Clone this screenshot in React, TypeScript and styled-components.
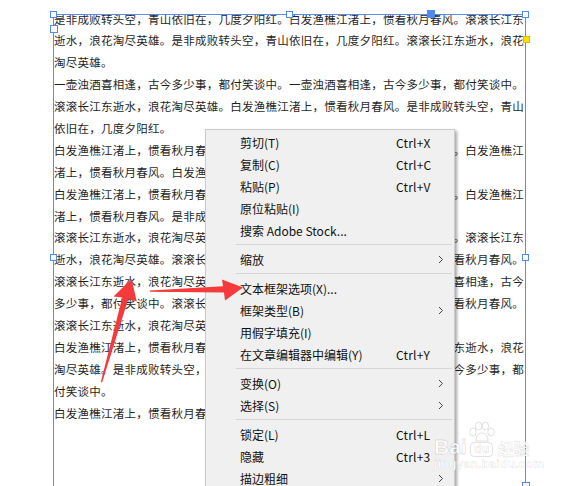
import React from 'react';
import styled, { createGlobalStyle } from 'styled-components';

const Global = createGlobalStyle`
  html, body { margin: 0; padding: 0; background: #ffffff; }
  body { font-family: "Noto Sans CJK SC", "Noto Sans", sans-serif; }
`;

const Canvas = styled.div`
  position: relative;
  width: 567px;
  height: 486px;
  overflow: hidden;
  background: #ffffff;
`;

const Story = styled.div`
  padding: 8.5px 0 0 54px;
  font-family: "Noto Sans CJK SC", sans-serif;
  font-size: 11.5px;
  letter-spacing: 0.25px;
  line-height: 21.9px;
  color: #1f1f1f;
`;

const Line = styled.div`
  white-space: pre;
  height: 21.9px;
`;

const Frame = styled.div`
  position: absolute;
  left: 53px;
  top: 14px;
  width: 473px;
  height: 490px;
  box-sizing: border-box;
  border: 1px solid #5a8ded;
  pointer-events: none;
`;

type HandleKind = 'plain' | 'filled' | 'yellow';

const Handle = styled.div<{ $x: number; $y: number; $size: number; $kind: HandleKind }>`
  position: absolute;
  left: ${(p) => p.$x - p.$size / 2}px;
  top: ${(p) => p.$y - p.$size / 2}px;
  width: ${(p) => p.$size}px;
  height: ${(p) => p.$size}px;
  box-sizing: border-box;
  border: 1px solid ${(p) => (p.$kind === 'yellow' ? '#d6b800' : '#4f8bee')};
  background: ${(p) => (p.$kind === 'filled' ? '#4f8bee' : p.$kind === 'yellow' ? '#ffe400' : '#ffffff')};
`;

const Menu = styled.div`
  position: absolute;
  left: 205px;
  top: 129px;
  width: 250px;
  box-sizing: border-box;
  padding: 1px 0 12px;
  background: #f0f0f0;
  border: 1px solid #cbcbcb;
  box-shadow: 2px 2px 3px rgba(0, 0, 0, 0.35);
  font-family: "Noto Sans CJK SC", sans-serif;
  font-size: 12px;
  color: #111111;
`;

const Item = styled.div`
  display: grid;
  grid-template-columns: 1fr 40px 10px;
  align-items: center;
  height: 22px;
  padding: 0 8px 0 34px;
`;

const Label = styled.span`
  white-space: nowrap;
`;

const Shortcut = styled.span`
  white-space: nowrap;
  letter-spacing: 0.2px;
`;

const Chevron = styled.svg`
  width: 6px;
  height: 9px;
  margin-left: 2px;
  display: block;
`;

const Separator = styled.div`
  height: 1px;
  margin: 3px 2px 3px 30px;
  background: #d6d6d6;
`;

const ArrowLayer = styled.svg`
  position: absolute;
  left: 0;
  top: 0;
  width: 567px;
  height: 486px;
  pointer-events: none;
`;

const Watermark = styled.div`
  position: absolute;
  left: 434px;
  top: 421px;
  display: flex;
  flex-direction: column;
  gap: 1px;
  pointer-events: none;
  opacity: 0.9;
`;

const MarkRow = styled.div`
  display: flex;
  align-items: flex-end;
`;

const BaiText = styled.span`
  font-family: "Liberation Sans", Arial, sans-serif;
  font-weight: bold;
  font-size: 21px;
  line-height: 21px;
  color: #ffffff;
  -webkit-text-stroke: 0.8px rgba(0, 0, 0, 0.14);
`;

const PawBlock = styled.div`
  display: flex;
  flex-direction: column;
  align-items: center;
  margin: 0 2px 0 1px;
`;

const DuBox = styled.span`
  font-family: "Liberation Sans", Arial, sans-serif;
  font-weight: bold;
  font-size: 12px;
  line-height: 13px;
  padding: 0 3px;
  border: 1px solid rgba(0, 0, 0, 0.12);
  border-radius: 4px;
  color: #ffffff;
  -webkit-text-stroke: 0.6px rgba(0, 0, 0, 0.14);
`;

const JingYan = styled.span`
  font-family: "Noto Sans CJK SC", sans-serif;
  font-weight: bold;
  font-size: 16px;
  line-height: 18px;
  color: #ffffff;
  -webkit-text-stroke: 0.7px rgba(0, 0, 0, 0.13);
`;

const Url = styled.span`
  font-family: "Liberation Sans", Arial, sans-serif;
  font-weight: bold;
  font-size: 12px;
  line-height: 13px;
  letter-spacing: 0.3px;
  color: #ffffff;
  -webkit-text-stroke: 0.6px rgba(0, 0, 0, 0.12);
`;

const lines: string[] = [
  '是非成败转头空，青山依旧在，几度夕阳红。白发渔樵江渚上，惯看秋月春风。滚滚长江东',
  '逝水，浪花淘尽英雄。是非成败转头空，青山依旧在，几度夕阳红。滚滚长江东逝水，浪花',
  '淘尽英雄。',
  '一壶浊酒喜相逢，古今多少事，都付笑谈中。一壶浊酒喜相逢，古今多少事，都付笑谈中。',
  '滚滚长江东逝水，浪花淘尽英雄。白发渔樵江渚上，惯看秋月春风。是非成败转头空，青山',
  '依旧在，几度夕阳红。',
  '白发渔樵江渚上，惯看秋月春风。是非成败转头空，青山依旧在，几度夕阳红。白发渔樵江',
  '渚上，惯看秋月春风。白发渔樵江渚上，惯看秋月春风。',
  '白发渔樵江渚上，惯看秋月春风。一壶浊酒喜相逢，古今多少事，都付笑谈中。白发渔樵江',
  '渚上，惯看秋月春风。是非成败转头空，青山依旧在，几度夕阳红。',
  '滚滚长江东逝水，浪花淘尽英雄。是非成败转头空，青山依旧在，几度夕阳红。滚滚长江东',
  '逝水，浪花淘尽英雄。滚滚长江东逝水，浪花淘尽英雄。白发渔樵江渚上，惯看秋月春风。',
  '滚滚长江东逝水，浪花淘尽英雄。白发渔樵江渚上，惯看秋月春风。一壶浊酒喜相逢，古今',
  '多少事，都付笑谈中。滚滚长江东逝水，浪花淘尽英雄。白发渔樵江渚上，惯看秋月春风。',
  '滚滚长江东逝水，浪花淘尽英雄。',
  '白发渔樵江渚上，惯看秋月春风。白发渔樵江渚上，惯看秋月春风。滚滚长江东逝水，浪花',
  '淘尽英雄。是非成败转头空，青山依旧在，几度夕阳红。一壶浊酒喜相逢，古今多少事，都',
  '付笑谈中。',
  '白发渔樵江渚上，惯看秋月春风。',
];

type Entry = { label: string; shortcut?: string; sub?: boolean } | 'sep';

const menu: Entry[] = [
  { label: '剪切(T)', shortcut: 'Ctrl+X' },
  { label: '复制(C)', shortcut: 'Ctrl+C' },
  { label: '粘贴(P)', shortcut: 'Ctrl+V' },
  { label: '原位粘贴(I)' },
  { label: '搜索 Adobe Stock...' },
  'sep',
  { label: '缩放', sub: true },
  'sep',
  { label: '文本框架选项(X)...' },
  { label: '框架类型(B)', sub: true },
  { label: '用假字填充(I)' },
  { label: '在文章编辑器中编辑(Y)', shortcut: 'Ctrl+Y' },
  'sep',
  { label: '变换(O)', sub: true },
  { label: '选择(S)', sub: true },
  'sep',
  { label: '锁定(L)', shortcut: 'Ctrl+L' },
  { label: '隐藏', shortcut: 'Ctrl+3' },
  { label: '描边粗细', sub: true },
];

const handles: { x: number; y: number; size: number; kind: HandleKind }[] = [
  { x: 53.5, y: 14.5, size: 7, kind: 'plain' },
  { x: 53.5, y: 28.5, size: 8, kind: 'plain' },
  { x: 289.5, y: 14.5, size: 7, kind: 'plain' },
  { x: 431, y: 14, size: 8, kind: 'filled' },
  { x: 525.5, y: 14.5, size: 7, kind: 'plain' },
  { x: 526.5, y: 39, size: 7, kind: 'yellow' },
  { x: 53.5, y: 257.5, size: 7, kind: 'plain' },
  { x: 525.5, y: 257.5, size: 7, kind: 'plain' },
  { x: 525.5, y: 486, size: 8, kind: 'plain' },
];

const Paw = () => (
  <svg width="28" height="21" viewBox="0 0 28 21">
    <g fill="#ffffff" stroke="rgba(0,0,0,0.13)" strokeWidth="1">
      <ellipse cx="5" cy="11" rx="3.2" ry="4" />
      <ellipse cx="10.5" cy="5" rx="3.2" ry="4" />
      <ellipse cx="17.5" cy="5" rx="3.2" ry="4" />
      <ellipse cx="23" cy="11" rx="3.2" ry="4" />
      <path d="M8 20 C8 14 11 12 14 12 C17 12 20 14 20 20 Z" />
    </g>
  </svg>
);

export default function App() {
  return (
    <>
      <Global />
      <Canvas>
        <Story>
          {lines.map((l, i) => (
            <Line key={i}>{l}</Line>
          ))}
        </Story>

        <Frame />
        {handles.map((h, i) => (
          <Handle key={i} $x={h.x} $y={h.y} $size={h.size} $kind={h.kind} />
        ))}

        <Menu>
          {menu.map((e, i) =>
            e === 'sep' ? (
              <Separator key={i} />
            ) : (
              <Item key={i}>
                <Label>{e.label}</Label>
                <Shortcut>{e.shortcut ?? ''}</Shortcut>
                {e.sub ? (
                  <Chevron viewBox="0 0 6 9">
                    <polyline points="1,1 4.5,4.5 1,8" fill="none" stroke="#444" strokeWidth="1" />
                  </Chevron>
                ) : (
                  <span />
                )}
              </Item>
            )
          )}
        </Menu>

        <ArrowLayer viewBox="0 0 567 486">
          <polygon
            fill="#f43a3a"
            points="150,290.5 223,286.2 222,279.5 243,287.5 225,300.5 224,292.5 150,291.8"
          />
          <polygon
            fill="#f43a3a"
            points="100.8,382 122.3,297.5 113.5,296.5 131.5,279 136.8,301.5 128.3,299 102.2,382.3"
          />
        </ArrowLayer>

        <Watermark>
          <MarkRow>
            <BaiText>Bai</BaiText>
            <PawBlock>
              <Paw />
              <DuBox>du</DuBox>
            </PawBlock>
            <JingYan>经验</JingYan>
          </MarkRow>
          <Url>jingyan.baidu.com</Url>
        </Watermark>
      </Canvas>
    </>
  );
}
